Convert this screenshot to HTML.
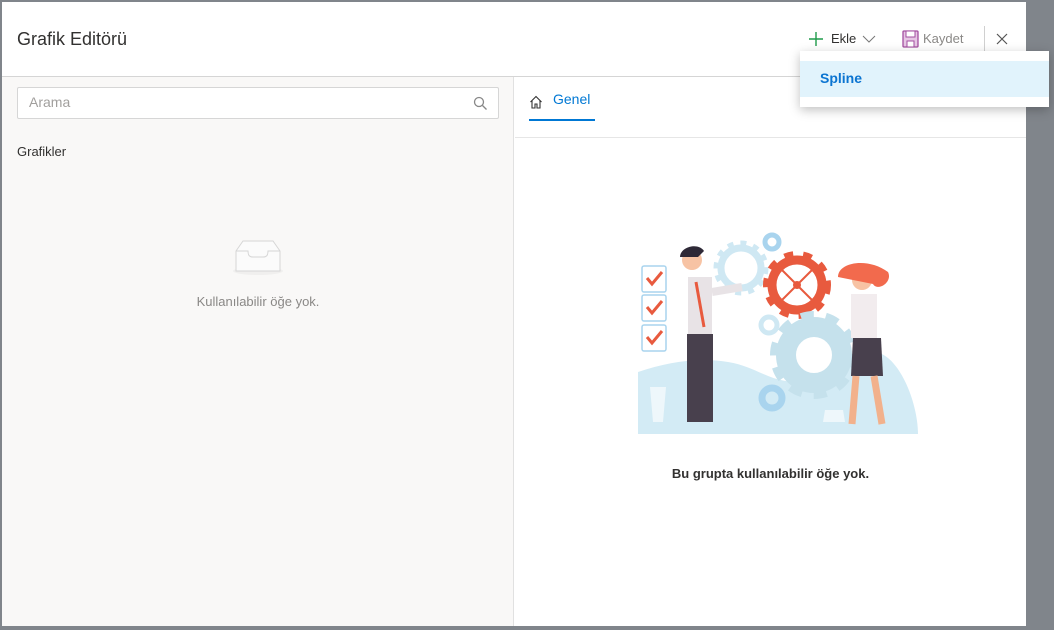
<!DOCTYPE html>
<html><head><meta charset="utf-8"><style>
*{margin:0;padding:0;box-sizing:border-box}
body{width:1054px;height:630px;background:#80858b;font-family:"Segoe UI","Liberation Sans",sans-serif;position:relative;overflow:hidden}
.dlg{position:absolute;left:2px;top:2px;width:1024px;height:624px;background:#fff}
.title{position:absolute;left:15px;top:27px;font-size:18px;color:#323130;font-weight:500}
.hdr{position:absolute;left:0;top:74px;width:1024px;height:1px;background:#d5d5d5}
.left{position:absolute;left:0;top:75px;width:512px;height:549px;background:#f9f8f7;border-right:1px solid #e1e1e1}
.search{position:absolute;left:15px;top:10px;width:482px;height:32px;border:1px solid #d6d6d6;background:#fff;border-radius:2px;font-size:14px;color:#a19f9d;padding:6px 11px}
.t{position:absolute;font-size:13px;color:#323130}
.tabline{position:absolute;left:513px;top:135px;width:511px;height:1px;background:#e6e6e6}
</style></head><body>
<div class="dlg">
<div class="title">Grafik Editörü</div>
<svg style="position:absolute;left:806px;top:29px" width="16" height="16"><path d="M8 1v14M1 8h14" stroke="#1f9b4a" stroke-width="1.4"/></svg>
<div class="t" style="left:829px;top:29px">Ekle</div>
<svg style="position:absolute;left:860px;top:32px" width="14" height="10"><path d="M1 2l6 6 6-6" stroke="#777" fill="none"/></svg>
<svg style="position:absolute;left:900px;top:28px" width="17" height="18"><rect x="1" y="1" width="15" height="16" rx="1" fill="#e6c6e4" stroke="#a34fa0" stroke-width="1.3"/><rect x="4" y="1" width="9" height="6" fill="#fff" stroke="#a34fa0"/><rect x="5" y="11" width="7" height="6" fill="#fff" stroke="#a34fa0"/></svg>
<div class="t" style="left:921px;top:29px;color:#8a8886">Kaydet</div>
<div style="position:absolute;left:982px;top:24px;width:1px;height:26px;background:#d0d0d0"></div>
<svg style="position:absolute;left:994px;top:31px" width="12" height="12"><path d="M1 1l10 10M11 1L1 11" stroke="#555" stroke-width="1.2"/></svg>
<div class="hdr"></div>
<div class="left">
 <div class="search">Arama
  <svg style="position:absolute;right:11px;top:8px" width="14" height="14"><circle cx="6" cy="6" r="4.5" stroke="#888" fill="none" stroke-width="1.3"/><path d="M9.5 9.5l4 4" stroke="#888" stroke-width="1.3"/></svg></div>
 <div class="t" style="left:15px;top:67px">Grafikler</div>
 <svg style="position:absolute;left:226px;top:160px" width="60" height="40"><ellipse cx="30" cy="34" rx="25" ry="4" fill="#f0efee"/><path d="M8 14l7-10h30l7 10v20H8z" fill="#fbfbfb" stroke="#d6d6d6"/><path d="M8 14h12c0 5 2 6 5 6h10c3 0 5-1 5-6h12" fill="none" stroke="#d6d6d6"/></svg>
 <div class="t" style="left:0;width:512px;text-align:center;top:217px;color:#8a8886">Kullanılabilir öğe yok.</div>
</div>
<svg style="position:absolute;left:527px;top:93px" width="14" height="14"><path d="M1.5 7L7 1.5 12.5 7M3 5.5V13h3V9h2v4h3V5.5" fill="none" stroke="#333" stroke-width="1.1"/></svg>
<div class="t" style="left:551px;top:89px;color:#0078d4;font-size:14px">Genel</div>
<div style="position:absolute;left:527px;top:117px;width:66px;height:2px;background:#0078d4"></div>
<div class="tabline"></div>
<svg style="position:absolute;left:636px;top:230px" width="280" height="205" viewBox="0 0 280 205">
<path d="M0 202V140c30-10 60-15 90-10s40 20 70 20 50-30 75-30 45 50 45 82z" fill="#d3ebf5"/>
<g fill="#fff" stroke="#a9d4ee" stroke-width="1.5"><rect x="4" y="34" width="24" height="26" rx="2"/><rect x="4" y="63" width="24" height="26" rx="2"/><rect x="4" y="93" width="24" height="26" rx="2"/></g>
<g stroke="#e85a3e" stroke-width="3" fill="none"><path d="M9 46l5 6 10-12M9 75l5 6 10-12M9 105l5 6 10-12"/></g>
<circle cx="103" cy="36" r="20" fill="none" stroke="#cfe8f3" stroke-width="7"/>
<circle cx="103" cy="36" r="25" fill="none" stroke="#cfe8f3" stroke-width="5" stroke-dasharray="6 7"/>
<circle cx="159" cy="53" r="25" fill="none" stroke="#e85a3e" stroke-width="9"/>
<circle cx="159" cy="53" r="31" fill="none" stroke="#e85a3e" stroke-width="6" stroke-dasharray="9 10"/>
<circle cx="159" cy="53" r="4" fill="#e85a3e"/><path d="M144 38l30 30M174 38l-30 30" stroke="#e85a3e" stroke-width="2"/>
<circle cx="176" cy="123" r="28" fill="none" stroke="#c5e1ec" stroke-width="20"/>
<circle cx="176" cy="123" r="40" fill="none" stroke="#c5e1ec" stroke-width="8" stroke-dasharray="13 12"/>
<circle cx="134" cy="10" r="7" fill="none" stroke="#a9d4ee" stroke-width="5"/>
<circle cx="131" cy="93" r="8" fill="none" stroke="#cfe8f3" stroke-width="5"/>
<circle cx="134" cy="166" r="10" fill="none" stroke="#a9d4ee" stroke-width="7"/>
<rect x="50" y="45" width="24" height="60" fill="#e8e3e6"/><rect x="49" y="102" width="26" height="88" fill="#48404d"/>
<path d="M58 50l8 45" stroke="#e85a3e" stroke-width="3"/>
<circle cx="54" cy="28" r="10" fill="#f7c3a4"/><path d="M42 25c0-10 18-15 24-6l-6 6z" fill="#2e2937"/>
<path d="M74 60l30-5" stroke="#e8e3e6" stroke-width="8"/>
<rect x="213" y="62" width="26" height="44" fill="#f2ecee"/><path d="M215 106h28l2 38h-32z" fill="#48404d"/>
<path d="M218 144l-4 48M236 144l8 48" stroke="#f2b18c" stroke-width="7"/>
<circle cx="224" cy="48" r="10" fill="#f7c3a4"/><path d="M200 45c0-15 30-20 50-5 5 10-10 20-15 12z" fill="#f26a4d"/>
<path d="M15 190l-3-35h16l-3 35z" fill="#eef7fb"/><path d="M185 190h22l-2-12h-18z" fill="#eef7fb"/>
</svg>
<div class="t" style="left:513px;width:511px;text-align:center;top:464px;font-weight:bold;color:#323130">Bu grupta kullanılabilir öğe yok.</div>
</div>
<div style="position:absolute;left:800px;top:51px;width:249px;height:56px;background:#fff;box-shadow:0 3px 10px rgba(0,0,0,.25)">
 <div style="position:absolute;left:0;top:10px;width:249px;height:36px;background:#e1f3fc;color:#0b74d1;font-weight:bold;font-size:14px;padding:9px 20px">Spline</div>
</div>
</body></html>
